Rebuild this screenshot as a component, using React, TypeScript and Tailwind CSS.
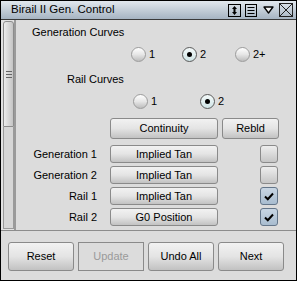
import React from "react";

const btn =
  "flex items-center justify-center rounded-[3px] border border-[#8a8a8a] bg-gradient-to-b from-[#f2f2f2] via-[#e4e4e4] to-[#c2c2c2] text-black";

function Radio({ on, label, w }: { on?: boolean; label: string; w: string }) {
  return (
    <div className={`flex items-center gap-[3px] ${w}`}>
      {on ? (
        <div className="w-[15px] h-[15px] rounded-full border border-[#5a5a5a] bg-gradient-to-b from-[#f4fafa] to-[#cfe4e6] flex items-center justify-center">
          <div className="w-[5px] h-[5px] rounded-full bg-black" />
        </div>
      ) : (
        <div className="w-[15px] h-[15px] rounded-full border border-[#9c9c9c] bg-gradient-to-b from-[#ffffff] via-[#e6e6e6] to-[#bdbdbd]" />
      )}
      <span>{label}</span>
    </div>
  );
}

function Check({ on }: { on?: boolean }) {
  if (!on)
    return <div className="w-[18px] h-[18px] rounded-[3px] border border-[#8a8a8a] bg-gradient-to-b from-[#eeeeee] to-[#c6c6c6]" />;
  return (
    <div className="w-[18px] h-[18px] rounded-[3px] border border-[#64768a] bg-gradient-to-b from-[#c8d6e4] to-[#a8bccf] flex items-center justify-center">
      <svg width="10" height="9" viewBox="0 0 10 9">
        <path d="M1 4.5 L3.8 7.2 L9 1.5" fill="none" stroke="#000" strokeWidth="2" />
      </svg>
    </div>
  );
}

const rows = [
  { label: "Generation 1", mode: "Implied Tan", on: false },
  { label: "Generation 2", mode: "Implied Tan", on: false },
  { label: "Rail 1", mode: "Implied Tan", on: true },
  { label: "Rail 2", mode: "G0 Position", on: true },
];

export default function App() {
  return (
    <div className="w-[297px] h-[281px] border border-black bg-[#dcdcdc] flex flex-col text-[11px] text-black font-['Liberation_Sans',Arial,sans-serif]">
      {/* Title bar */}
      <div className="h-[19px] flex items-center border-b border-[#3a3a3a] bg-gradient-to-b from-[#e2e8ee] to-[#a6b4c2]">
        <span className="pl-[10px] text-[11.5px] flex-1">Birail II Gen. Control</span>
        <div className="flex items-center pr-[3px]">
          <svg width="13" height="13" viewBox="0 0 13 13" className="mr-[4px]">
            <rect x="0.5" y="0.5" width="12" height="12" fill="none" stroke="#000" />
            <path d="M6.5 2 L9 5 H4 Z M6.5 11 L9 8 H4 Z" fill="#000" />
            <rect x="5.5" y="4.5" width="2" height="4" fill="#000" />
          </svg>
          <svg width="12" height="13" viewBox="0 0 12 13" className="mr-[6px]">
            <rect x="0.5" y="0.5" width="11" height="12" fill="none" stroke="#000" />
            <path d="M2.5 3.5 H9.5 M2.5 6.5 H9.5 M2.5 9.5 H9.5" stroke="#000" />
          </svg>
          <svg width="11" height="10" viewBox="0 0 11 10" className="mr-[5px]">
            <path d="M1 2 H10 L5.5 8 Z" fill="#f4f4f4" stroke="#000" strokeWidth="1.3" strokeLinejoin="round" />
          </svg>
          <svg width="14" height="14" viewBox="0 0 14 14">
            <rect x="0.5" y="0.5" width="13" height="13" fill="none" stroke="#222" />
            <path d="M1 1 L13 13 M13 1 L1 13" stroke="#222" />
          </svg>
        </div>
      </div>

      {/* Body */}
      <div className="h-[211px] flex border-b border-[#8c8c8c]">
        <div className="w-[15px] flex flex-col pl-[2px] pt-[1px] pb-[1px] border-r-2 border-[#9a9a9a] bg-[#e2e2e2]">
          <div className="h-[106px] w-[11px] rounded-t-[3px] border border-[#8c8c8c] bg-gradient-to-r from-[#ececec] to-[#c4c4c4] flex flex-col items-center justify-center gap-[2px]">
            <div className="w-[6px] h-px bg-[#666]" />
            <div className="w-[6px] h-px bg-[#666]" />
            <div className="w-[6px] h-px bg-[#666]" />
          </div>
          <div className="flex-1 w-[11px] border border-t-0 border-[#9a9a9a] bg-[#d6d6d6]" />
        </div>

        <div className="flex-1 flex flex-col">
          <div className="h-[24px] flex items-center pl-[16px]">Generation Curves</div>
          <div className="h-[21px] flex items-center pl-[115px]">
            <Radio label="1" w="w-[51px]" />
            <Radio label="2" on w="w-[53px]" />
            <Radio label="2+" w="w-[40px]" />
          </div>
          <div className="h-[29px] flex items-center pl-[51px]">Rail Curves</div>
          <div className="h-[15px] flex items-center pl-[117px]">
            <Radio label="1" w="w-[67px]" />
            <Radio label="2" on w="w-[30px]" />
          </div>
          <div className="mt-[9px] h-[21px] flex pl-[94px] gap-[4px]">
            <div className={`${btn} w-[108px]`}>Continuity</div>
            <div className={`${btn} w-[57px]`}>Rebld</div>
          </div>
          <div className="mt-[6px] flex flex-col gap-[3px]">
            {rows.map((r) => (
              <div key={r.label} className="h-[18px] flex items-center">
                <div className="w-[81px] text-right">{r.label}</div>
                <div className={`${btn} ml-[13px] w-[108px] h-[18px]`}>{r.mode}</div>
                <div className="ml-[42px]">
                  <Check on={r.on} />
                </div>
              </div>
            ))}
          </div>
        </div>
      </div>

      {/* Bottom buttons */}
      <div className="flex-1 flex pl-[7px] pt-[11px] gap-[4px]">
        <div className={`${btn} w-[66px] h-[29px]`}>Reset</div>
        <div className="w-[66px] h-[29px] flex items-center justify-center border border-[#8a8a8a] text-[#9a9a9a]">Update</div>
        <div className={`${btn} w-[66px] h-[29px]`}>Undo All</div>
        <div className={`${btn} w-[66px] h-[29px]`}>Next</div>
      </div>
    </div>
  );
}
